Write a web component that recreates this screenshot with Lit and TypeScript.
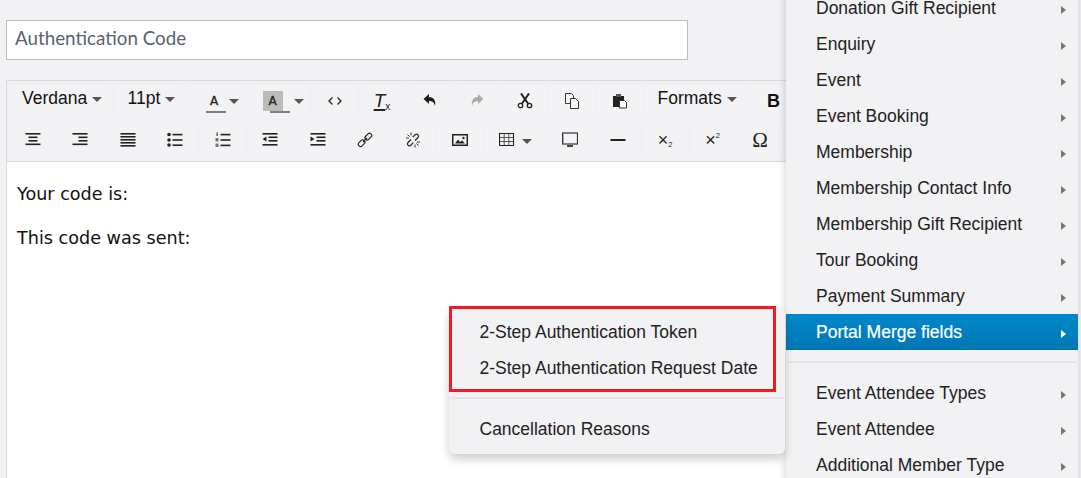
import { LitElement, html, css, svg } from "lit";
import { customElement } from "lit/decorators.js";

const I = (body: unknown, w = 16, h = 16) =>
  html`<svg class="ic" width=${w} height=${h} viewBox="0 0 16 16" fill="#222">${body}</svg>`;
const bars = (rows: number[][]) =>
  rows.map(([x, y, w, h = 1.6]) => svg`<rect x=${x} y=${y} width=${w} height=${h} />`);

const icons: Record<string, unknown> = {
  center: I(bars([[0.5, 1, 15], [3.5, 4.5, 9], [3.5, 8, 9], [0.5, 11.5, 15]])),
  right: I(bars([[0.5, 1, 15], [6.5, 4.5, 9], [6.5, 8, 9], [0.5, 11.5, 15]])),
  justify: I(bars([[0.5, 1, 15], [0.5, 4, 15], [0.5, 7, 15], [0.5, 10, 15], [0.5, 13, 15]])),
  bullets: I(svg`<circle cx="2" cy="2.5" r="1.8"/><circle cx="2" cy="8" r="1.8"/><circle cx="2" cy="13" r="1.8"/>${bars([[5.5, 1.8, 10], [5.5, 7.2, 10], [5.5, 12.4, 10]])}`),
  numbers: I(svg`<rect x="1.5" y="0.5" width="1.4" height="3.5" fill="#555"/><rect x=".5" y="6" width="3" height="3.5" fill="#777"/><rect x=".5" y="11.5" width="3" height="3.5" fill="#777"/>${bars([[5.5, 1.8, 10], [5.5, 7.2, 10], [5.5, 12.6, 10]])}`),
  outdent: I(svg`${bars([[0.5, 1, 15], [6.5, 4.5, 9], [6.5, 8, 9], [0.5, 12, 15]])}<path d="M4.5 4.5v5L.5 7z"/>`),
  indent: I(svg`${bars([[0.5, 1, 15], [6.5, 4.5, 9], [6.5, 8, 9], [0.5, 12, 15]])}<path d="M.5 4.5v5L4.500 7z"/>`),
  link: I(svg`<g fill="none" stroke="#222" stroke-width="1.15"><rect x="-3.7" y="-2.2" width="7.4" height="4.4" rx="2" transform="translate(4.6 11.2) rotate(-45)"/><rect x="-3.7" y="-2.2" width="7.4" height="4.4" rx="2" transform="translate(11.4 4.6) rotate(-45)"/><path d="M6 10l4-4"/></g>`),
  unlink: I(svg`<g fill="none" stroke="#222" stroke-width="1.2"><path d="M6 7.5L3 10.5a2 2 0 0 0 2.6 3l2.7-2.8"/><path d="M10 8.5l3-3a2 2 0 0 0-2.6-3L7.7 5.2"/></g><g fill="none" stroke="#333" stroke-width="1"><path d="M1 6h3M2.500 2.500l2 2M6 .5v3M15 10h-3M13.500 13.500l-2-2M10 15.500v-3"/></g>`),
  image: I(svg`<path fill-rule="evenodd" d="M0 2h16v12H0zM1.500 3.500v9h13v-9z"/><path d="M3 11.500l3-4 2 2.500 2-1.500 3 3z"/><circle cx="11.500" cy="6" r="1.200"/>`),
  table: I(svg`<path fill="none" stroke="#555" stroke-width="1" d="M.5 5.500h14M.5 9.500h14M5.200 1.500v12M9.800 1.500v12"/><path fill="none" stroke="#222" stroke-width="1.100" d="M.5 1.500h14v12H.5z"/>`),
  monitor: I(svg`<rect x=".5" y="1" width="15" height="11" fill="#f4f4f6" stroke="#333" stroke-width="1.200"/><rect x="5" y="13" width="6" height="2" fill="#444"/><rect x="1" y="1" width="1" height="11" fill="#4a8ab0" opacity=".5"/>`),
  hr: I(bars([[0.5, 7, 15, 2]])),
  undo: I(svg`<path d="M7 1L1.500 6l5.500 5V8c3 0 5 1 6 5 1-5-1-9-6-9z"/>`),
  redo: I(svg`<path fill="#aaa" d="M9 1l5.500 5L9 11V8c-3 0-5 1-6 5-1-5 1-9 6-9z"/>`),
  cut: I(svg`<g fill="none" stroke="#222"><circle cx="3.500" cy="12.500" r="2.200" stroke-width="1.300"/><circle cx="12.500" cy="12.500" r="2.200" stroke-width="1.300"/><path stroke-width="2" d="M5 10.500L12 .5M11 10.500L4 .5"/></g>`),
  copy: I(svg`<g fill="#f6f6f8" stroke="#333" stroke-width="1"><path d="M1.500 .5h6l2 2v8h-8z"/><path d="M6.500 5.500h5l3 3v7h-8z"/></g>`),
  paste: I(svg`<rect x="1" y="3" width="11" height="11"/><rect x="4" y="1" width="5" height="3" fill="#555"/><path d="M7.500 7.500h5l2 2v5.500h-7z" fill="#fff" stroke="#333"/>`),
  code: I(svg`<path fill="none" stroke="#222" stroke-width="1.300" d="M5.500 4.500L2 8l3.500 3.500M10.500 4.500L14 8l-3.500 3.500"/>`),
};

const caret = html`<i class="caret"></i>`;

@customElement("app-root")
export class AppRoot extends LitElement {
  static styles = css`
    :host { display: block; position: relative; width: 1081px; height: 478px; overflow: hidden; background: #f2f2f5; font-family: "Liberation Sans", Arial, sans-serif; }
    .main { display: flex; flex-direction: column; padding: 20px 0 0 6px; width: 1075px; height: 458px; box-sizing: content-box; }
    .title { width: 682px; height: 40px; box-sizing: border-box; border: 1px solid #bbbcc0; background: #fff; display: flex; align-items: center; padding: 0 8px 5px; font: 18.8px Lato, sans-serif; color: #5a6270; }
    .editor { margin-top: 20px; flex: 1; border: 1px solid #d9d9db; border-width: 1px 0 0 1px; display: flex; flex-direction: column; }
    .toolbar { display: flex; flex-direction: column; padding: 3px 0 0 3px; height: 81px; box-sizing: border-box; background: #f2f2f5; border-bottom: 1px solid #d9d9db; }
    .row { display: flex; gap: 2.5px; align-items: flex-start; }
    .row.r2 { margin-top: 4px; }
    .btn { width: 45px; height: 36px; box-sizing: border-box; border-radius: 4px; background: #f3f3f6; box-shadow: 0 0 1px #ececef; display: flex; align-items: center; justify-content: center; color: #222; flex: none; }
    .r1 .btn { height: 34px; }
    .ic { display: block; }
    .txt { width: auto; font-size: 17.5px; color: #111; height: 30px !important; justify-content: flex-start; padding-bottom: 2px; }
    .caret { display: block; width: 0; height: 0; border: solid transparent; border-width: 5px 5px 0; border-top-color: #555; margin-left: 5px; margin-top: 3px; }
    .w-font { width: 102px; padding-left: 12px; }
    .w-size { width: 70px; padding-left: 13px; }
    .w-fmt { width: 103px; padding-left: 13px; }
    .w-b { width: 45px; font-weight: bold; font-size: 18px; color: #111; padding-left: 2px; padding-right: 0; }
    .w-color { width: 60px; justify-content: flex-start; padding-left: 19px; }
    .w-color.bg { padding-left: 13px; }
    .w-color .caret { margin-left: 3px; margin-top: 0; }
    .w-color.bg .caret { margin-left: 11px; }
    .w-table { width: 60px; justify-content: flex-start; padding-left: 14px; }
    .w-table .caret { margin-left: 7px; margin-top: 2px; }
    .sw { width: 20px; height: 20px; position: relative; display: flex; align-items: center; justify-content: center; font: 12px "DejaVu Sans", sans-serif; -webkit-text-stroke: .35px #222; color: #222; }
    .bg .sw { background: #bbb; }
    .sw::after { content: ""; position: absolute; left: 0; top: 20px; width: 20px; height: 2px; background: #808080; }
    .bg .sw::after { left: 7px; }
    .plain .sw { padding-right: 4px; box-sizing: border-box; }
    .tx { font: italic 19px "Liberation Sans", sans-serif; color: #222; display: flex; align-items: flex-end; }
    .tx u { text-decoration: underline; text-underline-offset: 2px; text-decoration-thickness: 1.5px; }
    .tx small { font: normal 10px "Liberation Sans", sans-serif; }
    .script { font-size: 18px; line-height: 18px; color: #222; display: flex; }
    .script.sub { align-items: flex-end; }
    .script small { font-size: 7.5px; line-height: 9px; }
    .omega { font: 21px "Liberation Serif", serif; color: #222; }
    .content { flex: 1; background: #fff; padding: 22px 0 0 10px; font: 17.6px/20px "DejaVu Sans", Verdana, sans-serif; color: #111; }
    .content p { margin: 0 0 24px; }
    .menu { position: absolute; background: #f2f2f5; border-radius: 0 0 6px 6px; box-shadow: 0 5px 10px rgba(0,0,0,.2); font-size: 17.5px; color: #222; padding: 7px 0; box-sizing: border-box; }
    .main-menu { left: 786px; top: -17px; width: 292px; }
    .sub-menu { left: 449px; top: 307px; width: 336px; border-radius: 6px; }
    .item { height: 36px; display: flex; align-items: center; justify-content: space-between; padding: 0 12px 0 30px; }
    .sub-menu .item { padding-left: 30.5px; }
    .item b { display: block; width: 0; height: 0; border: solid transparent; border-width: 4.5px 0 4.500px 5px; border-left-color: #777; margin-top: 4px; }
    .item.active { background: linear-gradient(#0088cc, #0077b3); color: #fff; -webkit-text-stroke: .2px #fff; }
    .item.active b { border-left-color: #fff; }
    .sep { height: 2px; background: #e5e5e7; margin: 11px 1px 12px; }
    .mark { position: absolute; left: 449px; top: 306px; width: 327px; height: 86px; box-sizing: border-box; border: 3px solid #ed1c24; }
    .strip { position: absolute; left: 1078px; top: 0; bottom: 0; width: 3px; background: #f8f8fa; }
  `;

  private ico(name: string) { return html`<div class="btn">${icons[name]}</div>`; }

  render() {
    const items = ["Donation Gift Recipient", "Enquiry", "Event", "Event Booking", "Membership", "Membership Contact Info", "Membership Gift Recipient", "Tour Booking", "Payment Summary"];
    const after = ["Event Attendee Types", "Event Attendee", "Additional Member Type"];
    const item = (t: string, cls = "") => html`<div class="item ${cls}"><span>${t}</span><b></b></div>`;
    return html`
      <div class="main">
        <div class="title">Authentication Code</div>
        <div class="editor">
          <div class="toolbar">
            <div class="row r1">
              <div class="btn txt w-font">Verdana${caret}</div>
              <div class="btn txt w-size">11pt${caret}</div>
              <div class="btn w-color plain"><span class="sw">A</span>${caret}</div>
              <div class="btn w-color bg"><span class="sw">A</span>${caret}</div>
              ${this.ico("code")}
              <div class="btn"><span class="tx"><u>T</u><small>x</small></span></div>
              ${this.ico("undo")}${this.ico("redo")}${this.ico("cut")}${this.ico("copy")}${this.ico("paste")}
              <div class="btn txt w-fmt">Formats${caret}</div>
              <div class="btn w-b">B</div>
            </div>
            <div class="row r2">
              ${["center", "right", "justify", "bullets", "numbers", "outdent", "indent", "link", "unlink", "image"].map((n) => this.ico(n))}
              <div class="btn w-table">${icons.table}${caret}</div>
              ${this.ico("monitor")}${this.ico("hr")}
              <div class="btn"><span class="script sub">×<small>2</small></span></div>
              <div class="btn"><span class="script sup">×<small>2</small></span></div>
              <div class="btn"><span class="omega">Ω</span></div>
            </div>
          </div>
          <div class="content"><p>Your code is:</p><p>This code was sent:</p></div>
        </div>
      </div>
      <div class="strip"></div>
      <div class="menu main-menu">
        ${items.map((t) => item(t))}
        ${item("Portal Merge fields", "active")}
        <div class="sep"></div>
        ${after.map((t) => item(t))}
      </div>
      <div class="menu sub-menu">
        <div class="item"><span>2-Step Authentication Token</span></div>
        <div class="item"><span>2-Step Authentication Request Date</span></div>
        <div class="sep"></div>
        <div class="item"><span>Cancellation Reasons</span></div>
      </div>
      <div class="mark"></div>
    `;
  }
}
